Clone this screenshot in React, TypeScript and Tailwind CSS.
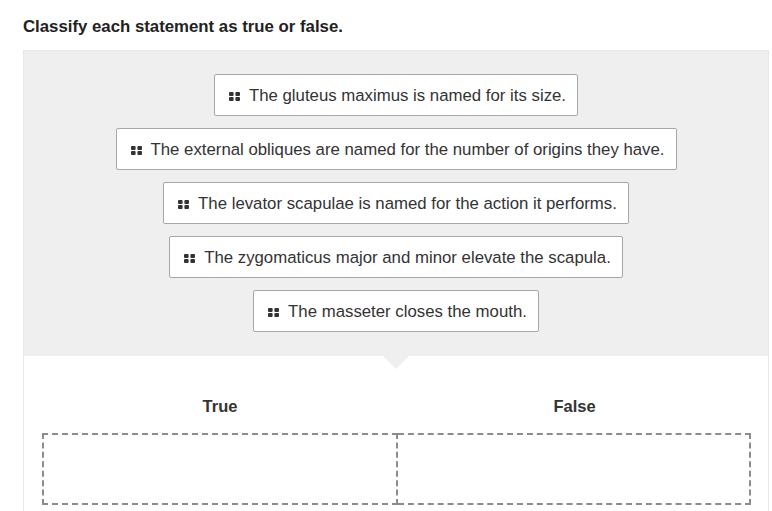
const statements = [
  'The gluteus maximus is named for its size.',
  'The external obliques are named for the number of origins they have.',
  'The levator scapulae is named for the action it performs.',
  'The zygomaticus major and minor elevate the scapula.',
  'The masseter closes the mouth.',
];

const GripIcon = () => (
  <svg width="11" height="9" viewBox="0 0 11 9" className="shrink-0">
    <rect x="0" y="0" width="4.6" height="4" rx="1" fill="#333" />
    <rect x="6.4" y="0" width="4.6" height="4" rx="1" fill="#333" />
    <rect x="0" y="5" width="4.6" height="4" rx="1" fill="#333" />
    <rect x="6.4" y="5" width="4.6" height="4" rx="1" fill="#333" />
  </svg>
);

const StatementCard = ({ text }: { text: string }) => (
  <div className="flex items-center gap-[9px] rounded-[2px] border border-[#a8a8a8] bg-white pl-[14px] pr-[11px] pt-[11px] pb-[9px] text-[16.8px] leading-[20px] text-[#333]">
    <GripIcon />
    <span>{text}</span>
  </div>
);

export default function App() {
  return (
    <div className="min-h-screen bg-white pl-[23px] pr-[3px] pt-[18px] font-['Liberation_Sans',Arial,sans-serif]">
      <h1 className="text-[16.8px] font-bold leading-[18px] text-[#222]">Classify each statement as true or false.</h1>

      <div className="mt-[14px] border border-[#e8e8e8]">
        <div className="relative flex flex-col items-center gap-[12px] bg-[#efefef] pt-[23px] pb-[24px]">
          {statements.map((s) => (
            <StatementCard key={s} text={s} />
          ))}
          <div className="absolute left-1/2 top-full -translate-x-1/2 border-x-[13px] border-t-[13px] border-x-transparent border-t-[#efefef]" />
        </div>

        <div className="pl-[18px] pr-[17px] pt-[41px] pb-[6px]">
          <div className="grid grid-cols-[356px_1fr]">
            <div className="text-center text-[16.5px] font-bold leading-[18px] text-[#333]">True</div>
            <div className="text-center text-[16.5px] font-bold leading-[18px] text-[#333]">False</div>
          </div>
          <div className="mt-[18px] grid grid-cols-[356px_1fr]">
            <div className="h-[72px] border-2 border-dashed border-[#8c8c8c]" />
            <div className="h-[72px] border-2 border-l-0 border-dashed border-[#8c8c8c]" />
          </div>
        </div>
      </div>
    </div>
  );
}
